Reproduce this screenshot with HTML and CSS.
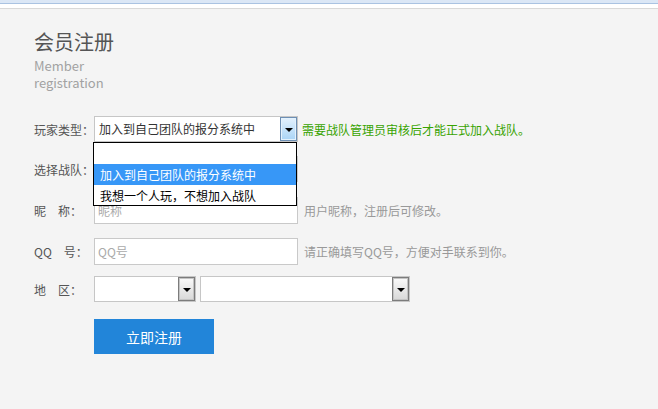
FILE: index.html
```html
<!DOCTYPE html>
<html lang="zh-CN">
<head>
  <meta charset="UTF-8">
  <meta name="viewport" content="width=device-width, initial-scale=1.0">
  <title>会员注册</title>
  <link rel="stylesheet" href="styles.css">
</head>
<body>
  <div class="topbar"></div>
  <div class="container">
    <h1>会员注册</h1>
    <p class="subtitle">Member registration</p>

    <form class="reg-form">
      <div class="form-row">
        <label>玩家类型：</label>
        <div class="field">
          <div class="select focused wide">
            <span>加入到自己团队的报分系统中</span>
            <i class="arrow"></i>
          </div>
          <ul class="dropdown">
            <li></li>
            <li class="active">加入到自己团队的报分系统中</li>
            <li>我想一个人玩，不想加入战队</li>
          </ul>
        </div>
        <span class="tip green">需要战队管理员审核后才能正式加入战队。</span>
      </div>
      <div class="form-row team">
        <label>选择战队：</label>
        <input type="text" class="text">
      </div>
      <div class="form-row tall">
        <label>昵　称：</label>
        <input type="text" class="text" placeholder="昵称">
        <span class="tip">用户昵称，注册后可修改。</span>
      </div>
      <div class="form-row tall qq">
        <label>QQ　号：</label>
        <input type="text" class="text" placeholder="QQ号">
        <span class="tip">请正确填写QQ号，方便对手联系到你。</span>
      </div>
      <div class="form-row">
        <label>地　区：</label>
        <div class="select province"><span></span><i class="arrow"></i></div>
        <div class="select city"><span></span><i class="arrow"></i></div>
      </div>
      <button type="button" class="submit">立即注册</button>
    </form>
  </div>
</body>
</html>
```

FILE: styles.css
```css
body {
  margin: 0;
  background: #f4f4f4;
  font-family: "Noto Sans CJK SC", "Noto Sans", sans-serif;
  font-size: 12px;
  color: #555;
}
.topbar {
  height: 5px;
  background: #fff;
  border-top: 3px solid #dbe7f6;
  border-bottom: 1px solid #d9d9d9;
  box-shadow: inset 0 1px 0 #aac3e2;
}
.container {
  padding: 21px 34px 0;
}
h1 {
  margin: 0;
  font-size: 20px;
  font-weight: normal;
  line-height: 24px;
  color: #555;
}
.subtitle {
  width: 80px;
  margin: 3px 0 0;
  font-size: 13px;
  line-height: 17px;
  color: #a2a2a2;
}
.reg-form {
  margin-top: 25px;
}
.form-row {
  display: flex;
  align-items: center;
  height: 26px;
  margin-bottom: 14px;
}
.form-row.team {
  margin-bottom: 15px;
}
.form-row.tall {
  height: 27px;
}
.form-row.qq {
  margin-bottom: 11px;
}
.form-row label {
  width: 60px;
  flex: none;
}
.field {
  position: relative;
}
.select {
  position: relative;
  box-sizing: border-box;
  height: 26px;
  background: #fff;
  border: 1px solid #c6c6c6;
  color: #333;
  line-height: 24px;
  padding-left: 4px;
}
.select.wide {
  width: 204px;
}
.select.province {
  width: 102px;
}
.select.city {
  width: 210px;
  margin-left: 4px;
}
.arrow {
  position: absolute;
  top: 0;
  right: 0;
  width: 17px;
  height: 24px;
  box-sizing: border-box;
  border: 1px solid #7c7c7c;
  box-shadow: inset 0 0 0 1px #c4c4c4;
  background: linear-gradient(#fafafa, #d8d8d8);
}
.arrow::after {
  content: "";
  position: absolute;
  left: 4px;
  top: 10px;
  border-left: 4px solid transparent;
  border-right: 4px solid transparent;
  border-top: 4px solid #000;
}
.focused .arrow {
  border-color: #6d8fb4;
  box-shadow: inset 0 0 0 1px #e4f2fd;
  background: linear-gradient(#e3f1fd, #a9d4f6);
}
.dropdown {
  position: absolute;
  top: 26px;
  left: -1px;
  z-index: 5;
  width: 204px;
  box-sizing: border-box;
  margin: 0;
  padding: 0;
  list-style: none;
  background: #fff;
  border: 1px solid #000;
}
.dropdown li {
  height: 21px;
  line-height: 21px;
  padding-left: 6px;
  color: #000;
}
.dropdown li:last-child {
  height: 20px;
}
.dropdown li.active {
  background: #3797f7;
  color: #fff;
}
.text {
  box-sizing: border-box;
  width: 204px;
  height: 100%;
  margin: 0;
  padding: 0 3px;
  border: 1px solid #c9c9c9;
  background: #fff;
  font-family: inherit;
  font-size: 12px;
  color: #333;
  outline: none;
}
.text::placeholder {
  color: #aaa;
}
.tip {
  margin-left: 6px;
  color: #999;
}
.tip.green {
  margin-left: 4px;
  color: #38a300;
}
.submit {
  display: block;
  width: 120px;
  height: 35px;
  margin: 17px 0 0 60px;
  border: none;
  background: #2285d9;
  color: #fff;
  font-family: inherit;
  font-size: 14px;
  cursor: pointer;
}
```
